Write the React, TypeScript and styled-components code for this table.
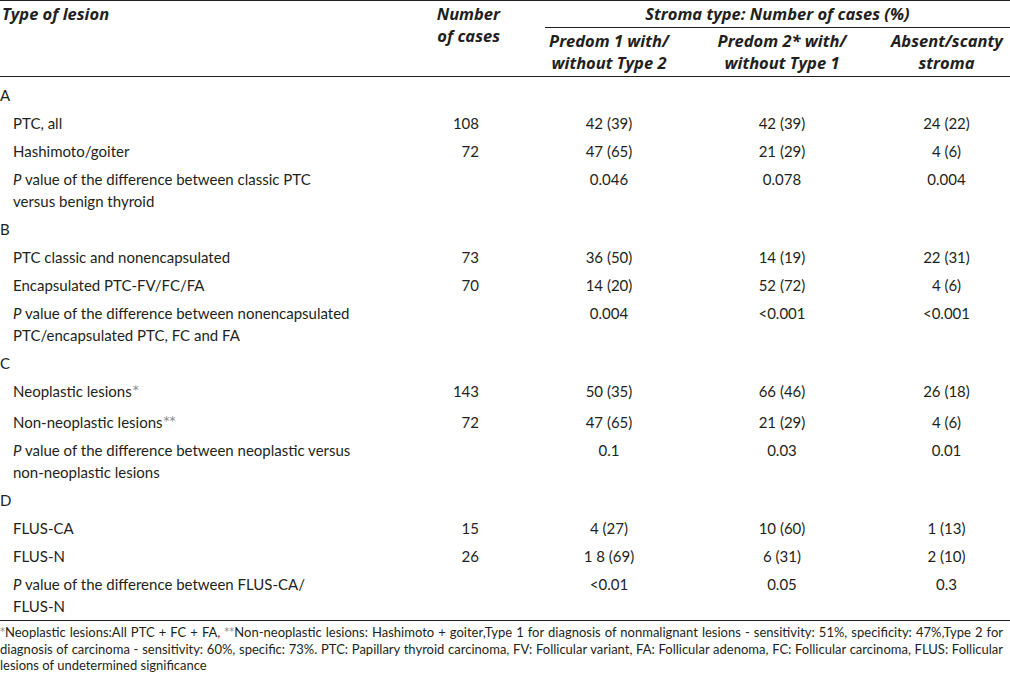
import React from "react";
import styled, { createGlobalStyle } from "styled-components";

const GlobalStyle = createGlobalStyle`
  html, body { margin: 0; padding: 0; background: #ffffff; }
  body {
    font-family: Lato, "Open Sans", "Liberation Sans", sans-serif;
    color: #231f20;
  }
`;

const Page = styled.div`
  width: 1010px;
  display: flex;
  flex-direction: column;
`;

const Table = styled.table`
  width: 1010px;
  border-collapse: collapse;
  table-layout: fixed;
  font-size: 15px;
  line-height: 22px;
  border-top: 1px solid #231f20;
`;

const HeadCell = styled.th<{ $align?: string; $pr?: number; $pl?: number; $rule?: boolean }>`
  font-family: "Open Sans", Lato, sans-serif;
  font-weight: 700;
  font-style: italic;
  font-size: 16.5px;
  line-height: 22px;
  text-align: ${(p) => p.$align || "center"};
  vertical-align: top;
  padding: 2px ${(p) => p.$pr ?? 0}px 2px ${(p) => p.$pl ?? 0}px;
  border-bottom: ${(p) => (p.$rule ? "1px solid #231f20" : "none")};
`;

const HeadRow = styled.tr<{ $last?: boolean }>`
  border-bottom: ${(p) => (p.$last ? "1px solid #231f20" : "none")};
`;

const Row = styled.tr<{ $pt?: number; $rule?: boolean }>`
  border-bottom: ${(p) => (p.$rule ? "1px solid #231f20" : "none")};
  td {
    padding-top: ${(p) => p.$pt ?? 3}px;
  }
`;

const LetterCell = styled.td`
  padding: 3px 0 3px 0;
  text-align: left;
  vertical-align: top;
`;

const LabelCell = styled.td`
  padding: 3px 0 3px 13px;
  text-align: left;
  vertical-align: top;
`;

const CountCell = styled.td`
  padding: 3px 66px 3px 0;
  text-align: right;
  vertical-align: top;
`;

const ValueCell = styled.td<{ $pr?: number }>`
  padding: 3px ${(p) => p.$pr ?? 0}px 3px 0;
  text-align: center;
  vertical-align: top;
`;

const Star = styled.span`
  font-family: "DejaVu Sans", sans-serif;
  color: #8a8a8a;
  font-size: 12px;
  line-height: 0;
  position: relative;
  top: -3px;
  margin-left: 1px;
`;

const Footnote = styled.div`
  font-size: 13px;
  line-height: 16.5px;
  padding: 3px 7px 0 0;
  display: flex;
  flex-direction: column;
`;

const FootLine = styled.div<{ $last?: boolean }>`
  text-align: justify;
  text-align-last: ${(p) => (p.$last ? "left" : "justify")};
  white-space: nowrap;
`;

const FootStar = styled.span`
  font-family: "DejaVu Sans", sans-serif;
  color: #8a8a8a;
  font-size: 10px;
  line-height: 0;
  position: relative;
  top: -2px;
`;

type DataRow = {
  label: React.ReactNode;
  n?: string;
  v: [string, string, string];
  pt?: number;
};

type Section = { letter: string; rows: DataRow[] };

const PLabel = ({ a, b }: { a: string; b: string }) => (
  <>
    <i>P</i> {a}
    <br />
    {b}
  </>
);

const sections: Section[] = [
  {
    letter: "A",
    rows: [
      { label: "PTC, all", n: "108", v: ["42 (39)", "42 (39)", "24 (22)"] },
      { label: "Hashimoto/goiter", n: "72", v: ["47 (65)", "21 (29)", "4 (6)"] },
      {
        label: <PLabel a="value of the difference between classic PTC" b="versus benign thyroid" />,
        v: ["0.046", "0.078", "0.004"],
      },
    ],
  },
  {
    letter: "B",
    rows: [
      { label: "PTC classic and nonencapsulated", n: "73", v: ["36 (50)", "14 (19)", "22 (31)"] },
      { label: "Encapsulated PTC-FV/FC/FA", n: "70", v: ["14 (20)", "52 (72)", "4 (6)"] },
      {
        label: (
          <PLabel
            a="value of the difference between nonencapsulated"
            b="PTC/encapsulated PTC, FC and FA"
          />
        ),
        v: ["0.004", "<0.001", "<0.001"],
      },
    ],
  },
  {
    letter: "C",
    rows: [
      {
        label: (
          <>
            Neoplastic lesions<Star>*</Star>
          </>
        ),
        n: "143",
        v: ["50 (35)", "66 (46)", "26 (18)"],
      },
      {
        label: (
          <>
            Non-neoplastic lesions<Star>**</Star>
          </>
        ),
        n: "72",
        v: ["47 (65)", "21 (29)", "4 (6)"],
        pt: 6,
      },
      {
        label: (
          <PLabel a="value of the difference between neoplastic versus" b="non-neoplastic lesions" />
        ),
        v: ["0.1", "0.03", "0.01"],
      },
    ],
  },
  {
    letter: "D",
    rows: [
      { label: "FLUS-CA", n: "15", v: ["4 (27)", "10 (60)", "1 (13)"] },
      { label: "FLUS-N", n: "26", v: ["1 8 (69)", "6 (31)", "2 (10)"] },
      {
        label: <PLabel a="value of the difference between FLUS-CA/" b="FLUS-N" />,
        v: ["<0.01", "0.05", "0.3"],
      },
    ],
  },
];

export default function App() {
  return (
    <>
      <GlobalStyle />
      <Page>
        <Table>
          <colgroup>
            <col style={{ width: 430 }} />
            <col style={{ width: 115 }} />
            <col style={{ width: 128 }} />
            <col style={{ width: 218 }} />
            <col style={{ width: 119 }} />
          </colgroup>
          <thead>
            <HeadRow>
              <HeadCell rowSpan={2} $align="left" $pl={2}>
                Type of lesion
              </HeadCell>
              <HeadCell rowSpan={2} $align="right" $pr={45}>
                Number
                <br />
                of cases
              </HeadCell>
              <HeadCell colSpan={3} $rule>
                Stroma type: Number of cases (%)
              </HeadCell>
            </HeadRow>
            <HeadRow $last>
              <HeadCell>
                Predom 1 with/
                <br />
                without Type 2
              </HeadCell>
              <HeadCell>
                Predom 2* with/
                <br />
                without Type 1
              </HeadCell>
              <HeadCell $pr={8}>
                Absent/scanty
                <br />
                stroma
              </HeadCell>
            </HeadRow>
          </thead>
          <tbody>
            {sections.map((s, si) => (
              <React.Fragment key={s.letter}>
                <Row $pt={si === 0 ? 7 : 3}>
                  <LetterCell colSpan={5}>{s.letter}</LetterCell>
                </Row>
                {s.rows.map((r, ri) => {
                  const isLast = si === sections.length - 1 && ri === s.rows.length - 1;
                  return (
                    <Row key={ri} $pt={r.pt} $rule={isLast}>
                      <LabelCell>{r.label}</LabelCell>
                      <CountCell>{r.n ?? ""}</CountCell>
                      <ValueCell>{r.v[0]}</ValueCell>
                      <ValueCell>{r.v[1]}</ValueCell>
                      <ValueCell $pr={8}>{r.v[2]}</ValueCell>
                    </Row>
                  );
                })}
              </React.Fragment>
            ))}
          </tbody>
        </Table>
        <Footnote>
          <FootLine>
            <FootStar>*</FootStar>Neoplastic lesions:All PTC + FC + FA, <FootStar>**</FootStar>Non-neoplastic
            lesions: Hashimoto + goiter,Type 1 for diagnosis of nonmalignant lesions - sensitivity: 51%,
            specificity: 47%,Type 2 for
          </FootLine>
          <FootLine>
            diagnosis of carcinoma - sensitivity: 60%, specific: 73%. PTC: Papillary thyroid carcinoma, FV:
            Follicular variant, FA: Follicular adenoma, FC: Follicular carcinoma, FLUS: Follicular
          </FootLine>
          <FootLine $last>lesions of undetermined significance</FootLine>
        </Footnote>
      </Page>
    </>
  );
}
